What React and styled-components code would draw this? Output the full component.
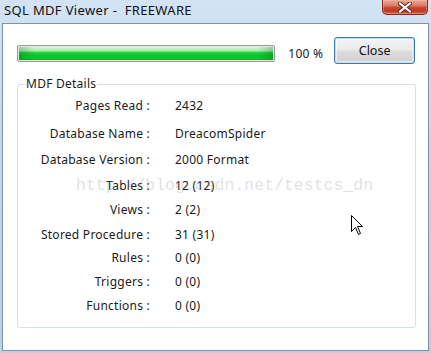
import React from 'react';
import styled, { createGlobalStyle } from 'styled-components';

const Global = createGlobalStyle`
	html, body { margin: 0; padding: 0; background: #bcd2ea; }
	body { font-family: "Noto Sans", "Liberation Sans", sans-serif; }
`;

const Window = styled.div`
	width: 431px;
	height: 353px;
	box-sizing: border-box;
	padding: 0 2px 2px 2px;
	display: flex;
	flex-direction: column;
	background: linear-gradient(to bottom, #d3e3f4 0%, #c3d7ee 40%, #b9d0ea 100%);
`;

const TitleBar = styled.div`
	height: 23px;
	display: flex;
	align-items: flex-start;
	justify-content: space-between;
`;

const Title = styled.div`
	margin: 2px 0 0 2px;
	font-size: 13px;
	letter-spacing: 0.35px;
	line-height: 17px;
	color: #111;
	white-space: pre;
`;

const CloseX = styled.div`
	width: 46px;
	height: 15px;
	margin-right: 1px;
	box-sizing: border-box;
	border: 1px solid #7e2a1d;
	border-top: none;
	border-radius: 0 0 5px 5px;
	background: linear-gradient(to bottom, #e9a898 0%, #dc7b66 40%, #c7442c 55%, #c23a24 80%, #d76a4f 100%);
	box-shadow: inset 0 0 0 1px rgba(255, 200, 190, 0.35);
	display: flex;
	align-items: center;
	justify-content: center;
`;

const Client = styled.div`
	flex: 1;
	position: relative;
	background: #fff;
	border: 1px solid #7e91a8;
	padding: 13px 13px 0 14px;
	overflow: hidden;
`;

const TopRow = styled.div`
	display: flex;
	align-items: flex-start;
`;

const Progress = styled.div`
	width: 259px;
	height: 17px;
	box-sizing: border-box;
	margin-top: 8px;
	border: 1px solid #9a9a9a;
	border-radius: 2px;
	background: #e6e6e6;
	padding: 1px;
`;

const Fill = styled.div`
	height: 100%;
	background:
		linear-gradient(to right, rgba(0, 80, 0, 0.25) 0%, rgba(0, 80, 0, 0) 6%, rgba(0, 80, 0, 0) 94%, rgba(0, 80, 0, 0.25) 100%),
		linear-gradient(to bottom, #d4f5d4 0%, #a9eba9 30%, #2fd04a 42%, #06c82a 60%, #05cc2a 85%, #0fae28 100%);
`;

const Percent = styled.div`
	width: 46px;
	margin: 9px 0 0 13px;
	font-size: 12px;
	letter-spacing: 0.25px;
	line-height: 16px;
	color: #1a1a1a;
`;

const Button = styled.button`
	width: 81px;
	height: 27px;
	box-sizing: border-box;
	padding: 0;
	border: 1px solid #3d7bad;
	border-radius: 3px;
	font-family: inherit;
	font-size: 12.5px;
	color: #111;
	background: linear-gradient(to bottom, #f3f3f3 0%, #ebebeb 48%, #dddddd 52%, #cfcfcf 100%);
	box-shadow: inset 0 0 0 1px #b8e2f7, inset 0 0 0 2px rgba(255, 255, 255, 0.5);
`;

const Group = styled.fieldset`
	width: 399px;
	box-sizing: border-box;
	margin: 12px 0 0 0;
	padding: 6px 0 13px 0;
	border: 1px solid #d5dfe5;
	border-radius: 3px;
	min-inline-size: 0;
`;

const Legend = styled.legend`
	margin-left: 7px;
	padding: 0 1px;
	font-size: 12px;
	letter-spacing: 0.25px;
	line-height: 16px;
	color: #1a1a1a;
`;

const Row = styled.div`
	display: grid;
	grid-template-columns: 132px 1fr;
	column-gap: 25px;
	height: ${p => p.$h}px;
	font-size: 12px;
	letter-spacing: 0.25px;
	line-height: 16px;
	color: #1a1a1a;
`;

const Label = styled.div`
	text-align: right;
	white-space: pre;
`;

const Value = styled.div`
	white-space: pre;
`;

const Watermark = styled.div`
	position: absolute;
	left: 73px;
	top: 152px;
	font-family: "Liberation Mono", monospace;
	font-size: 16.5px;
	line-height: 20px;
	color: rgba(150, 150, 150, 0.3);
	pointer-events: none;
	white-space: pre;
`;

const Cursor = styled.svg`
	position: absolute;
	left: 348px;
	top: 191px;
`;

const rows = [
	['Pages Read :', '2432', 28],
	['Database Name :', 'DreacomSpider', 26],
	['Database Version :', '2000 Format', 26],
	['Tables :', '12 (12)', 24],
	['Views :', '2 (2)', 25],
	['Stored Procedure :', '31 (31)', 23],
	['Rules :', '0 (0)', 24],
	['Triggers :', '0 (0)', 24],
	['Functions :', '0 (0)', 16],
];

export default function App() {
	return (
		<>
			<Global />
			<Window>
				<TitleBar>
					<Title>{'SQL MDF Viewer -  FREEWARE'}</Title>
					<CloseX>
						<svg width="14" height="11" viewBox="0 0 14 11">
							<path d="M2 1.5 L12 9.5 M12 1.5 L2 9.5" stroke="#5a2a22" strokeWidth="4" strokeLinecap="square" />
							<path d="M2 1.5 L12 9.5 M12 1.5 L2 9.5" stroke="#fff" strokeWidth="2" strokeLinecap="square" />
						</svg>
					</CloseX>
				</TitleBar>
				<Client>
					<TopRow>
						<Progress><Fill /></Progress>
						<Percent>100 %</Percent>
						<Button>Close</Button>
					</TopRow>
					<Group>
						<Legend>MDF Details</Legend>
						{rows.map(([label, value, h]) => (
							<Row key={label} $h={h}>
								<Label>{label}</Label>
								<Value>{value}</Value>
							</Row>
						))}
					</Group>
					<Watermark>http://blog.csdn.net/testcs_dn</Watermark>
					<Cursor width="13" height="21" viewBox="0 0 13 21">
						<path d="M0.5 0.5 L0.5 16.5 L4.5 12.5 L7.5 19.5 L9.5 18.5 L6.5 11.5 L11.5 11.5 Z" fill="#fff" stroke="#000" strokeWidth="1" />
					</Cursor>
				</Client>
			</Window>
		</>
	);
}
